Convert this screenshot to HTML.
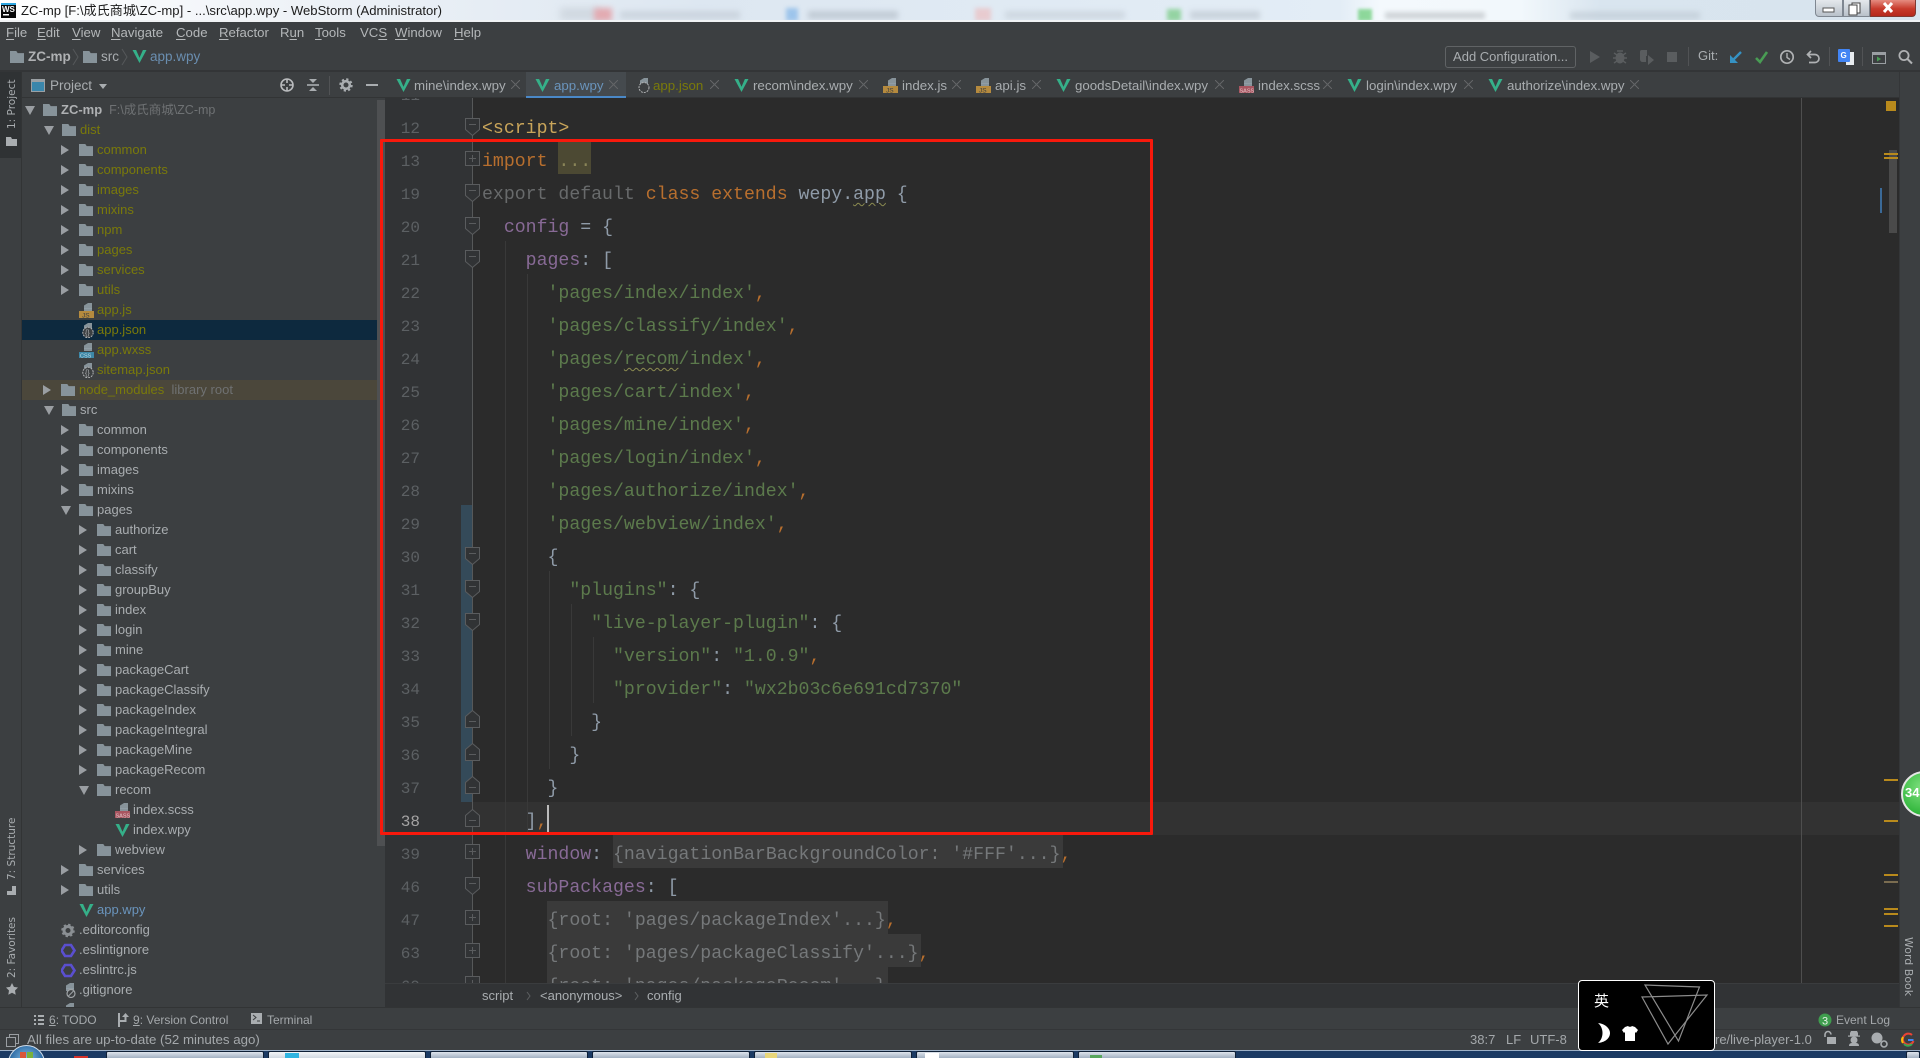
<!DOCTYPE html>
<html><head><meta charset="utf-8"><title>WebStorm</title>
<style>
*{box-sizing:border-box}
html,body{margin:0;padding:0;background:#3c3f41}
#p{position:relative;width:1920px;height:1058px;overflow:hidden;background:#3c3f41;font:13px/20px "Liberation Sans","Noto Sans CJK SC",sans-serif;color:#afb1b3}
.a{position:absolute;white-space:pre}
.m{position:absolute;top:23px;line-height:20px;font-size:13.2px;color:#b4b7b9}
.m u{text-decoration:underline;text-underline-offset:2px}
.t{position:absolute;top:76px;line-height:20px;font-size:13.3px;color:#a9adb0;white-space:pre}
.x{position:absolute;top:80px;width:9px;height:9px;background:linear-gradient(45deg,transparent 46%,#626466 46%,#626466 54%,transparent 54%),linear-gradient(-45deg,transparent 46%,#626466 46%,#626466 54%,transparent 54%)}
#tree{position:absolute;left:22px;top:100px;width:363px;height:907px;overflow:hidden}
.r{position:relative;height:20px;line-height:20px;white-space:pre;color:#a9adb0;margin-left:-22px;width:385px}
.r.d,.r.d span{color:#7a7a0a}
.r .ar{position:absolute;left:var(--x);top:5px;width:0;height:0;border-left:8px solid #9a9ea2;border-top:5px solid transparent;border-bottom:5px solid transparent}
.r .dn{position:absolute;left:var(--x);top:6px;width:0;height:0;border-top:9px solid #9a9ea2;border-left:5px solid transparent;border-right:5px solid transparent}
.r .fo{position:absolute;left:calc(var(--x) + 18px);top:4px;width:14px;height:12px;background:#87939a;clip-path:polygon(0 0,45% 0,55% 18%,100% 18%,100% 100%,0 100%)}
.r span{position:absolute;left:calc(var(--x) + 36px);top:0}
.r .ic{position:absolute;left:calc(var(--x) + 18px);top:3px}
.r.f span{left:calc(var(--x) + 18px)}
.r.f .ic{left:var(--x)}
#code{position:absolute;left:385px;top:98px;width:1514px;height:885px;overflow:hidden;background:#2b2b2b}
.l{position:absolute;left:97px;height:33px;font:18.2px/41px "Liberation Mono",monospace;white-space:pre;color:#8f9ba8}
.n{position:absolute;left:0;width:35px;text-align:right;font:16px/41px "Liberation Mono",monospace;color:#5c6063;height:33px}
.s{color:#5c7a4c}.k{color:#b86f2e}.q{color:#886a96}.g{color:#686a6b}.c{color:#b86f2e}
.wv{text-decoration:underline wavy #8c8c50 1px;text-underline-offset:3px}
.v{position:absolute;writing-mode:vertical-rl;transform:rotate(180deg);font-size:10.5px;line-height:14px;color:#a9adb0;white-space:pre;font-family:"DejaVu Sans",sans-serif}
.b{position:absolute;font-size:12px;line-height:20px;color:#a4a8ab;white-space:pre}
.tb{position:absolute;top:1051px;height:10px;border-radius:2px 2px 0 0;background:linear-gradient(#dfe5ec,#8fa0b5);border:1px solid #0f2036}
</style></head><body><div id="p">

<!-- title bar -->
<div class="a" style="left:0;top:0;width:1920px;height:21px;background:linear-gradient(90deg,#fff 0,#eef2f7 300px,#dde7f1 700px,#e3edf6 1340px,#f4f9fd 1380px,#f2f8fc 1520px,#d9e5ef 1600px,#d8e4ee 1920px);overflow:hidden">
 <div class="a" style="left:0;top:0;width:1920px;height:21px;opacity:.55">
 <div class="a" style="left:560px;top:8px;width:40px;height:12px;background:#c0c8d0;filter:blur(4px)"></div>
 <div class="a" style="left:594px;top:8px;width:18px;height:13px;background:#e4777c;filter:blur(3px)"></div>
 <div class="a" style="left:620px;top:11px;width:120px;height:8px;background:#bcc5cf;filter:blur(3px)"></div>
 <div class="a" style="left:786px;top:8px;width:12px;height:13px;background:#69a8e6;filter:blur(2px)"></div>
 <div class="a" style="left:808px;top:11px;width:90px;height:8px;background:#a9b3bd;filter:blur(3px)"></div>
 <div class="a" style="left:975px;top:8px;width:16px;height:13px;background:#efb3b3;filter:blur(2px)"></div>
 <div class="a" style="left:1005px;top:11px;width:120px;height:8px;background:#c0c9d2;filter:blur(3px)"></div>
 <div class="a" style="left:1167px;top:9px;width:14px;height:12px;background:#55c05f;filter:blur(2px)"></div>
 <div class="a" style="left:1190px;top:11px;width:70px;height:8px;background:#b4bdc6;filter:blur(3px)"></div>
 <div class="a" style="left:1358px;top:9px;width:14px;height:12px;background:#3fc14d;filter:blur(1.5px)"></div>
 <div class="a" style="left:1385px;top:12px;width:100px;height:7px;background:#b3b7bb;filter:blur(2.5px)"></div>
 <div class="a" style="left:1570px;top:12px;width:130px;height:7px;background:#b5c0ca;filter:blur(3px)"></div>
 </div>
 <div class="a" style="left:21px;top:1px;font-size:13.1px;line-height:20px;color:#1c1c1c">ZC-mp [F:\成氏商城\ZC-mp] - ...\src\app.wpy - WebStorm (Administrator)</div>
</div>
<div class="a" style="left:0;top:20px;width:1920px;height:2px;background:#f0f2f4"></div>
<svg class="a" style="left:1px;top:3px" width="15" height="15"><rect width="15" height="15" fill="#0a0a0a"/><rect x="2" y="11" width="6" height="1.5" fill="#fff"/><text x="1" y="9" font-size="8" font-weight="700" fill="#fff" font-family="Liberation Sans">WS</text><rect x="0" y="0" width="15" height="2" fill="#2fa6e0"/></svg>
<!-- window controls -->
<div class="a" style="left:1815px;top:0;width:28px;height:17px;background:linear-gradient(#e4e8ec,#b9c1ca);border:1px solid #7f8791;border-top:0;border-radius:0 0 0 4px"></div>
<div class="a" style="left:1843px;top:0;width:27px;height:17px;background:linear-gradient(#e4e8ec,#b9c1ca);border:1px solid #7f8791;border-top:0"></div>
<div class="a" style="left:1870px;top:0;width:46px;height:17px;background:linear-gradient(#e58c80,#c73a2b 55%,#b5291d);border:1px solid #7f3a33;border-top:0;border-radius:0 0 4px 0"></div>
<svg class="a" style="left:1815px;top:0" width="101" height="17"><rect x="8" y="8" width="11" height="4" fill="#fff" stroke="#555"/><rect x="37" y="3" width="8" height="10" fill="#fff" stroke="#444"/><rect x="34" y="5" width="8" height="10" fill="#fff" stroke="#444"/><path d="M69 3l8 9M77 3l-8 9" stroke="#fff" stroke-width="3"/></svg>

<!-- menu -->
<div class="m" style="left:6px"><u>F</u>ile</div><div class="m" style="left:37px"><u>E</u>dit</div><div class="m" style="left:72px"><u>V</u>iew</div><div class="m" style="left:111px"><u>N</u>avigate</div><div class="m" style="left:176px"><u>C</u>ode</div><div class="m" style="left:219px"><u>R</u>efactor</div><div class="m" style="left:280px">R<u>u</u>n</div><div class="m" style="left:315px"><u>T</u>ools</div><div class="m" style="left:360px">VC<u>S</u></div><div class="m" style="left:395px"><u>W</u>indow</div><div class="m" style="left:454px"><u>H</u>elp</div>

<!-- nav bar -->
<div class="a" style="left:10px;top:51px;width:14px;height:12px;background:#87939a;clip-path:polygon(0 0,45% 0,55% 18%,100% 18%,100% 100%,0 100%)"></div>
<div class="a" style="left:28px;top:47px;font-weight:700;color:#afb1b3;font-size:13.5px">ZC-mp</div>
<svg class="a" style="left:72px;top:48px" width="60" height="18" fill="none" stroke="#55585a"><path d="M1 1l5 8-5 8M50 1l5 8-5 8"/></svg>
<div class="a" style="left:83px;top:51px;width:14px;height:12px;background:#87939a;clip-path:polygon(0 0,45% 0,55% 18%,100% 18%,100% 100%,0 100%)"></div>
<div class="a" style="left:101px;top:47px;color:#a9adb0;font-size:13.5px">src</div>
<div class="a" style="left:150px;top:47px;color:#6a8eb0;font-size:13.5px">app.wpy</div>

<!-- toolbar button + git -->
<div class="a" style="left:1445px;top:46px;width:131px;height:22px;border:1px solid #606365;border-radius:3px;text-align:center;font-size:13px;line-height:20px;color:#a9adb0">Add Configuration...</div>
<div class="a" style="left:1698px;top:46px;font-size:13px;line-height:20px;color:#a9adb0">Git:</div>

<!-- tab bar -->
<div class="a" style="left:385px;top:72px;width:1514px;height:26px;background:#3c3f41"></div>
<div class="a" style="left:0;top:70px;width:1920px;height:2px;background:#333537"></div>
<div class="a" style="left:22px;top:97px;width:1877px;height:1px;background:#323435"></div>
<div class="a" style="left:526px;top:72px;width:100px;height:27px;background:#454a4e;border-bottom:3px solid #4a88c7"></div>
<div class="t" style="left:414px">mine\index.wpy</div><div class="x" style="left:511px"></div>
<div class="t" style="left:554px;color:#6a94bc">app.wpy</div><div class="x" style="left:609px"></div>
<div class="t" style="left:653px;color:#7a7a0a">app.json</div><div class="x" style="left:710px"></div>
<div class="t" style="left:753px">recom\index.wpy</div><div class="x" style="left:859px"></div>
<div class="t" style="left:902px">index.js</div><div class="x" style="left:952px"></div>
<div class="t" style="left:995px">api.js</div><div class="x" style="left:1032px"></div>
<div class="t" style="left:1075px">goodsDetail\index.wpy</div><div class="x" style="left:1215px"></div>
<div class="t" style="left:1258px">index.scss</div><div class="x" style="left:1323px"></div>
<div class="t" style="left:1366px">login\index.wpy</div><div class="x" style="left:1464px"></div>
<div class="t" style="left:1507px">authorize\index.wpy</div><div class="x" style="left:1630px"></div>

<!-- left strip -->
<div class="a" style="left:0;top:72px;width:21px;height:86px;background:#2f3234"></div>
<div class="a" style="left:21px;top:72px;width:1px;height:935px;background:#323435"></div>
<div class="v" style="left:5px;top:81px;height:48px">1: Project</div>
<div class="v" style="left:5px;top:820px;height:60px">7: Structure</div>
<div class="v" style="left:5px;top:920px;height:58px">2: Favorites</div>

<!-- project header -->
<div class="a" style="left:50px;top:76px;font-size:13.5px;color:#a9adb0">Project</div>

<!-- tree -->
<div id="tree">
<div class="r" style="--x:25px"><b class="dn"></b><b class="fo"></b><span><b style="color:#afb1b3">ZC-mp</b><span style="position:static;color:#6f7274;font-size:12.5px">  F:\成氏商城\ZC-mp</span></span></div>
<div class="r d" style="--x:44px"><b class="dn"></b><b class="fo"></b><span>dist</span></div>
<div class="r d" style="--x:61px"><b class="ar"></b><b class="fo"></b><span>common</span></div>
<div class="r d" style="--x:61px"><b class="ar"></b><b class="fo"></b><span>components</span></div>
<div class="r d" style="--x:61px"><b class="ar"></b><b class="fo"></b><span>images</span></div>
<div class="r d" style="--x:61px"><b class="ar"></b><b class="fo"></b><span>mixins</span></div>
<div class="r d" style="--x:61px"><b class="ar"></b><b class="fo"></b><span>npm</span></div>
<div class="r d" style="--x:61px"><b class="ar"></b><b class="fo"></b><span>pages</span></div>
<div class="r d" style="--x:61px"><b class="ar"></b><b class="fo"></b><span>services</span></div>
<div class="r d" style="--x:61px"><b class="ar"></b><b class="fo"></b><span>utils</span></div>
<div class="r d f" style="--x:79px"><svg class="ic" width="16" height="15"><use href="#pg"/><rect y="8" width="15" height="7" fill="#b58a3e"/><text x="3" y="14.5" font-size="6.5" fill="#3c3f41" font-family="Liberation Sans">JS</text></svg><span>app.js</span></div>
<div class="r d f" style="--x:79px;background:#0d293e"><svg class="ic" width="16" height="15"><use href="#pg"/><circle cx="9" cy="9.5" r="5.2" fill="#3c3f41" stroke="#afb1b3" stroke-dasharray="2 1"/><text x="6" y="12" font-size="7" fill="#afb1b3" font-family="Liberation Sans">{}</text></svg><span>app.json</span></div>
<div class="r d f" style="--x:79px"><svg class="ic" width="16" height="15"><use href="#pg"/><rect y="9" width="15" height="6" fill="#3d88a8"/><text x="1" y="14.5" font-size="5.5" fill="#c8dbe4" font-family="Liberation Sans">CSS</text></svg><span>app.wxss</span></div>
<div class="r d f" style="--x:79px"><svg class="ic" width="16" height="15"><use href="#pg"/><circle cx="9" cy="9.5" r="5.2" fill="#3c3f41" stroke="#afb1b3" stroke-dasharray="2 1"/><text x="6" y="12" font-size="7" fill="#afb1b3" font-family="Liberation Sans">{}</text></svg><span>sitemap.json</span></div>
<div class="r" style="--x:43px;background:#4b473b"><b class="ar"></b><b class="fo"></b><span style="color:#7a7a0a">node_modules<span style="position:static;color:#6f7172">  library root</span></span></div>
<div class="r" style="--x:44px"><b class="dn"></b><b class="fo"></b><span>src</span></div>
<div class="r" style="--x:61px"><b class="ar"></b><b class="fo"></b><span>common</span></div>
<div class="r" style="--x:61px"><b class="ar"></b><b class="fo"></b><span>components</span></div>
<div class="r" style="--x:61px"><b class="ar"></b><b class="fo"></b><span>images</span></div>
<div class="r" style="--x:61px"><b class="ar"></b><b class="fo"></b><span>mixins</span></div>
<div class="r" style="--x:61px"><b class="dn"></b><b class="fo"></b><span>pages</span></div>
<div class="r" style="--x:79px"><b class="ar"></b><b class="fo"></b><span>authorize</span></div>
<div class="r" style="--x:79px"><b class="ar"></b><b class="fo"></b><span>cart</span></div>
<div class="r" style="--x:79px"><b class="ar"></b><b class="fo"></b><span>classify</span></div>
<div class="r" style="--x:79px"><b class="ar"></b><b class="fo"></b><span>groupBuy</span></div>
<div class="r" style="--x:79px"><b class="ar"></b><b class="fo"></b><span>index</span></div>
<div class="r" style="--x:79px"><b class="ar"></b><b class="fo"></b><span>login</span></div>
<div class="r" style="--x:79px"><b class="ar"></b><b class="fo"></b><span>mine</span></div>
<div class="r" style="--x:79px"><b class="ar"></b><b class="fo"></b><span>packageCart</span></div>
<div class="r" style="--x:79px"><b class="ar"></b><b class="fo"></b><span>packageClassify</span></div>
<div class="r" style="--x:79px"><b class="ar"></b><b class="fo"></b><span>packageIndex</span></div>
<div class="r" style="--x:79px"><b class="ar"></b><b class="fo"></b><span>packageIntegral</span></div>
<div class="r" style="--x:79px"><b class="ar"></b><b class="fo"></b><span>packageMine</span></div>
<div class="r" style="--x:79px"><b class="ar"></b><b class="fo"></b><span>packageRecom</span></div>
<div class="r" style="--x:79px"><b class="dn"></b><b class="fo"></b><span>recom</span></div>
<div class="r f" style="--x:115px"><svg class="ic" width="16" height="15"><use href="#pg"/><rect y="8" width="15" height="7" fill="#a85560"/><text x="0.5" y="14.3" font-size="5.5" fill="#e3c9cc" font-family="Liberation Sans">SASS</text></svg><span>index.scss</span></div>
<div class="r f" style="--x:115px"><svg class="ic" width="15" height="15"><use href="#vv"/></svg><span>index.wpy</span></div>
<div class="r" style="--x:79px"><b class="ar"></b><b class="fo"></b><span>webview</span></div>
<div class="r" style="--x:61px"><b class="ar"></b><b class="fo"></b><span>services</span></div>
<div class="r" style="--x:61px"><b class="ar"></b><b class="fo"></b><span>utils</span></div>
<div class="r f" style="--x:79px"><svg class="ic" width="15" height="15"><use href="#vv"/></svg><span style="color:#6a94bc">app.wpy</span></div>
<div class="r f" style="--x:61px"><svg class="ic" width="15" height="15"><circle cx="7" cy="7.5" r="4" fill="none" stroke="#8a8f93" stroke-width="3"/><circle cx="7" cy="7.5" r="6" fill="none" stroke="#8a8f93" stroke-width="1.5" stroke-dasharray="2.4 2.3"/></svg><span>.editorconfig</span></div>
<div class="r f" style="--x:61px"><svg class="ic" width="15" height="15"><path d="M4 2h6l3.5 5.5L10 13H4L.5 7.5z" fill="none" stroke="#5a4fcf" stroke-width="2.6"/></svg><span>.eslintignore</span></div>
<div class="r f" style="--x:61px"><svg class="ic" width="15" height="15"><path d="M4 2h6l3.5 5.5L10 13H4L.5 7.5z" fill="none" stroke="#5a4fcf" stroke-width="2.6"/></svg><span>.eslintrc.js</span></div>
<div class="r f" style="--x:61px"><svg class="ic" width="16" height="15"><use href="#pg"/><circle cx="10" cy="10.5" r="4" fill="#3c3f41" stroke="#a0a4a7" stroke-width="1.2"/><path d="M7.5 13l5-5" stroke="#a0a4a7"/></svg><span>.gitignore</span></div>
<div class="r f" style="--x:61px"><svg class="ic" width="16" height="15"><use href="#pg"/></svg><span>.npmrc</span></div>
</div>
<div class="a" style="left:377px;top:100px;width:8px;height:746px;background:#4e5052"></div>

<!-- editor -->
<div id="code">
 <!-- gutter -->
 <div class="a" style="left:0;top:0;width:87px;height:885px;background:#313335"></div>
 <div class="a" style="left:76px;top:407px;width:11px;height:297px;background:#344a59"></div>
 <!-- current line -->
 <div class="a" style="left:88px;top:704px;width:1426px;height:33px;background:#323232"></div>
 <!-- folded regions -->
 <div class="a" style="left:173px;top:44px;width:33px;height:32px;background:#4c4933"></div>
 <div class="a" style="left:228px;top:737px;width:450px;height:33px;background:#3a3a3a"></div>
 <div class="a" style="left:162px;top:803px;width:341px;height:33px;background:#3a3a3a"></div>
 <div class="a" style="left:162px;top:836px;width:374px;height:33px;background:#3a3a3a"></div>
 <div class="a" style="left:162px;top:869px;width:341px;height:16px;background:#3a3a3a"></div>
 <!-- indent guides -->
 <div class="a" style="left:120px;top:143px;width:1px;height:742px;background:#393939"></div>
 <div class="a" style="left:142px;top:176px;width:1px;height:561px;background:#393939"></div>
 <div class="a" style="left:164px;top:473px;width:1px;height:198px;background:#393939"></div>
 <div class="a" style="left:186px;top:506px;width:1px;height:132px;background:#393939"></div>
 <div class="a" style="left:208px;top:539px;width:1px;height:66px;background:#393939"></div>
 <!-- fold line -->
 <div class="a" style="left:87px;top:0;width:1px;height:885px;background:#565859"></div>
 <!-- right margin -->
 <div class="a" style="left:1416px;top:0;width:1px;height:885px;background:#4e4e4e"></div>

 <!-- line numbers -->
 <div class="n" style="top:-22px">11</div>
 <div class="n" style="top:11px">12</div><div class="n" style="top:44px">13</div><div class="n" style="top:77px">19</div><div class="n" style="top:110px">20</div><div class="n" style="top:143px">21</div><div class="n" style="top:176px">22</div><div class="n" style="top:209px">23</div><div class="n" style="top:242px">24</div><div class="n" style="top:275px">25</div><div class="n" style="top:308px">26</div><div class="n" style="top:341px">27</div><div class="n" style="top:374px">28</div><div class="n" style="top:407px">29</div><div class="n" style="top:440px">30</div><div class="n" style="top:473px">31</div><div class="n" style="top:506px">32</div><div class="n" style="top:539px">33</div><div class="n" style="top:572px">34</div><div class="n" style="top:605px">35</div><div class="n" style="top:638px">36</div><div class="n" style="top:671px">37</div><div class="n" style="top:704px;color:#a4a3a3">38</div><div class="n" style="top:737px">39</div><div class="n" style="top:770px">46</div><div class="n" style="top:803px">47</div><div class="n" style="top:836px">63</div><div class="n" style="top:869px">69</div>

 <!-- code -->
 <div class="l" style="top:11px;color:#c9a55a">&lt;script&gt;</div>
 <div class="l" style="top:44px"><span class="k">import</span> <span style="color:#8a8558">...</span></div>
 <div class="l" style="top:77px"><span class="g">export default</span> <span class="k">class extends</span> wepy.<span class="wv">app</span> {</div>
 <div class="l" style="top:110px">  <span class="q">config</span> = {</div>
 <div class="l" style="top:143px">    <span class="q">pages</span>: [</div>
 <div class="l" style="top:176px">      <span class="s">'pages/index/index'</span><span class="c">,</span></div>
 <div class="l" style="top:209px">      <span class="s">'pages/classify/index'</span><span class="c">,</span></div>
 <div class="l" style="top:242px">      <span class="s">'pages/<span class="wv">recom</span>/index'</span><span class="c">,</span></div>
 <div class="l" style="top:275px">      <span class="s">'pages/cart/index'</span><span class="c">,</span></div>
 <div class="l" style="top:308px">      <span class="s">'pages/mine/index'</span><span class="c">,</span></div>
 <div class="l" style="top:341px">      <span class="s">'pages/login/index'</span><span class="c">,</span></div>
 <div class="l" style="top:374px">      <span class="s">'pages/authorize/index'</span><span class="c">,</span></div>
 <div class="l" style="top:407px">      <span class="s">'pages/webview/index'</span><span class="c">,</span></div>
 <div class="l" style="top:440px">      {</div>
 <div class="l" style="top:473px">        <span class="s">"plugins"</span>: {</div>
 <div class="l" style="top:506px">          <span class="s">"live-player-plugin"</span>: {</div>
 <div class="l" style="top:539px">            <span class="s">"version"</span>: <span class="s">"1.0.9"</span><span class="c">,</span></div>
 <div class="l" style="top:572px">            <span class="s">"provider"</span>: <span class="s">"wx2b03c6e691cd7370"</span></div>
 <div class="l" style="top:605px">          }</div>
 <div class="l" style="top:638px">        }</div>
 <div class="l" style="top:671px">      }</div>
 <div class="l" style="top:704px">    ]<span class="c">,</span></div>
 <div class="a" style="left:162px;top:707px;width:2px;height:27px;background:#bbb"></div>
 <div class="l" style="top:737px">    <span class="q">window</span>: <span style="color:#75787a">{navigationBarBackgroundColor: '#FFF'...}</span><span class="c">,</span></div>
 <div class="l" style="top:770px">    <span class="q">subPackages</span>: [</div>
 <div class="l" style="top:803px">      <span style="color:#75787a">{root: 'pages/packageIndex'...}</span><span class="c">,</span></div>
 <div class="l" style="top:836px">      <span style="color:#75787a">{root: 'pages/packageClassify'...}</span><span class="c">,</span></div>
 <div class="l" style="top:869px">      <span style="color:#75787a">{root: 'pages/packageRecom'...}</span><span class="c">,</span></div>

 <!-- fold markers -->
 <svg class="a" style="left:0;top:0" width="120" height="885" fill="#313335" stroke="#5a5c5e">
  <use href="#fo" y="11"/><use href="#fp" y="44"/><use href="#fo" y="77"/><use href="#fo" y="110"/><use href="#fo" y="143"/>
  <use href="#fo" y="440"/><use href="#fo" y="473"/><use href="#fo" y="506"/>
  <use href="#fc" y="605"/><use href="#fc" y="638"/><use href="#fc" y="671"/><use href="#fc" y="704"/>
  <use href="#fp" y="737"/><use href="#fo" y="770"/><use href="#fp" y="803"/><use href="#fp" y="836"/><use href="#fp" y="869"/>
 </svg>

 <!-- error stripes -->
 <div class="a" style="left:1501px;top:3px;width:10px;height:10px;background:#b98a1c"></div>
 <div class="a" style="left:1504px;top:52px;width:8px;height:83px;background:#4a4a4a"></div>
 <div class="a" style="left:1495px;top:90px;width:2px;height:25px;background:#3b6a98"></div>
 <div class="a" style="left:1499px;top:55px;width:14px;height:2px;background:#b98a1c"></div>
 <div class="a" style="left:1499px;top:59px;width:14px;height:2px;background:#b98a1c"></div>
 <div class="a" style="left:1499px;top:681px;width:14px;height:2px;background:#b98a1c"></div>
 <div class="a" style="left:1499px;top:722px;width:14px;height:2px;background:#b98a1c"></div>
 <div class="a" style="left:1499px;top:776px;width:14px;height:2px;background:#b98a1c"></div>
 <div class="a" style="left:1499px;top:783px;width:14px;height:2px;background:#7a6c50"></div>
 <div class="a" style="left:1499px;top:810px;width:14px;height:2px;background:#b98a1c"></div>
 <div class="a" style="left:1499px;top:815px;width:14px;height:2px;background:#b98a1c"></div>
 <div class="a" style="left:1499px;top:827px;width:14px;height:2px;background:#b98a1c"></div>
</div>

<!-- breadcrumbs -->
<div class="a" style="left:385px;top:983px;width:1514px;height:24px;background:#313335;border-top:1px solid #3a3c3e"></div>
<div class="b" style="left:482px;top:986px;color:#a9adb0;font-size:13px">script</div>
<div class="b" style="left:540px;top:986px;color:#a9adb0;font-size:13px">&lt;anonymous&gt;</div>
<div class="b" style="left:647px;top:986px;color:#a9adb0;font-size:13px">config</div>
<svg class="a" style="left:524px;top:990px" width="120" height="12" fill="none" stroke="#5c5f61"><path d="M3 2l3 4-3 4M111 2l3 4-3 4"/></svg>

<!-- bottom tool bar -->
<div class="a" style="left:0;top:1007px;width:1920px;height:1px;background:#323435"></div>
<div class="a" style="left:0;top:1029px;width:1920px;height:1px;background:#343638"></div>
<div class="b" style="left:49px;top:1010px"><u>6</u>: TODO</div>
<div class="b" style="left:133px;top:1010px"><u>9</u>: Version Control</div>
<div class="b" style="left:267px;top:1010px">Terminal</div>
<div class="b" style="left:1836px;top:1010px">Event Log</div>

<!-- status -->
<div class="b" style="left:27px;top:1030px;font-size:13.3px">All files are up-to-date (52 minutes ago)</div>
<div class="b" style="left:1470px;top:1030px;font-size:13px">38:7</div>
<div class="b" style="left:1506px;top:1030px;font-size:13px">LF</div>
<div class="b" style="left:1530px;top:1030px;font-size:13px">UTF-8</div>
<div class="b" style="left:1715px;top:1030px;font-size:13px">re/live-player-1.0</div>

<!-- right strip -->
<div class="a" style="left:1899px;top:72px;width:21px;height:935px;background:#3c3f41;border-left:1px solid #343638"></div>
<div class="a" style="left:1901px;top:937px;font:11px/14px 'DejaVu Sans',sans-serif;color:#a9adb0;writing-mode:vertical-rl;white-space:pre">Word Book</div>

<!-- taskbar -->
<div class="a" style="left:0;top:1050px;width:1920px;height:8px;background:#1b3a63;border-top:1px solid #9db0c6"></div>
<div class="tb" style="left:106px;width:158px"></div>
<div class="tb" style="left:268px;width:158px;background:linear-gradient(#f4f6f8,#c7d0da)"></div>
<div class="tb" style="left:430px;width:158px"></div>
<div class="tb" style="left:592px;width:158px"></div>
<div class="tb" style="left:754px;width:158px"></div>
<div class="tb" style="left:916px;width:158px"></div>
<div class="tb" style="left:1078px;width:158px"></div>
<div class="tb" style="left:1906px;width:14px"></div>
<div class="a" style="left:285px;top:1053px;width:14px;height:5px;background:#2fb4e0"></div>
<div class="a" style="left:765px;top:1053px;width:12px;height:5px;background:#e8d67a"></div>
<div class="a" style="left:925px;top:1053px;width:14px;height:5px;background:#fff"></div>
<div class="a" style="left:1090px;top:1055px;width:12px;height:3px;background:#58a65c"></div>
<div class="a" style="left:74px;top:1056px;width:14px;height:2px;background:#d5322a"></div>
<div class="a" style="left:8px;top:1045px;width:37px;height:37px;border-radius:50%;background:radial-gradient(circle at 50% 40%,#86c0e8,#1e5c98 70%);border:1px solid #d0dce8"></div>
<div class="a" style="left:20px;top:1052px;width:6px;height:6px;background:#d9563a"></div>
<div class="a" style="left:27px;top:1052px;width:6px;height:6px;background:#79b13c"></div>

<!-- icon layer -->
<svg class="a" style="left:0;top:0" width="1920" height="1058">
<defs>
 <symbol id="pg" viewBox="0 0 16 15" width="16" height="15"><path d="M5 2.500L9 0h4v8H5z" fill="#87939a"/><path d="M5 5h8v1H5z" fill="#9aa7b0" opacity=".5"/></symbol>
 <symbol id="vv" viewBox="0 0 15 15" width="15" height="15"><path d="M0.500 1h3.600L7.500 8.800 10.900 1h3.600L7.500 14z" fill="#35b089"/></symbol>
 <symbol id="fo" viewBox="0 0 120 33" width="120" height="33" overflow="visible"><path d="M80.500 9.500h14v11l-7 6-7-6z"/><path d="M84 15.500h7" fill="none"/></symbol>
 <symbol id="fc" viewBox="0 0 120 33" width="120" height="33" overflow="visible"><path d="M80.500 24.500h14v-11l-7-6-7 6z"/><path d="M84 18.500h7" fill="none"/></symbol>
 <symbol id="fp" viewBox="0 0 120 33" width="120" height="33" overflow="visible"><path d="M80.500 9.500h14v14h-14z"/><path d="M84 16.500h7M87.500 13v7" fill="none"/></symbol>
</defs>

<!-- tab icons -->
<use href="#vv" x="396" y="78"/><use href="#vv" x="535" y="78"/><use href="#vv" x="734" y="78"/><use href="#vv" x="1056" y="78"/><use href="#vv" x="1347" y="78"/><use href="#vv" x="1488" y="78"/>
<use href="#vv" x="132" y="49"/>
<g transform="translate(635 78)"><use href="#pg"/><circle cx="9" cy="9.500" r="5" fill="#3c3f41" stroke="#afb1b3" stroke-dasharray="2 1"/></g>
<g transform="translate(883 78)"><use href="#pg"/><rect y="8" width="15" height="7" fill="#b58a3e"/><text x="3" y="14.500" font-size="6.500" fill="#3c3f41" font-family="Liberation Sans">JS</text></g>
<g transform="translate(976 78)"><use href="#pg"/><rect y="8" width="15" height="7" fill="#b58a3e"/><text x="3" y="14.500" font-size="6.500" fill="#3c3f41" font-family="Liberation Sans">JS</text></g>
<g transform="translate(1239 78)"><use href="#pg"/><rect y="8" width="15" height="7" fill="#a85560"/><text x="0.500" y="14.300" font-size="5.500" fill="#e3c9cc" font-family="Liberation Sans">SASS</text></g>

<!-- sidebar icons -->
<path d="M6 137h5l1 2h5v7H6z" fill="#a9adb0"/>
<path d="M12 886h4v9H7v-4h5z" fill="#a9adb0"/>
<path d="M12 983l1.900 3.900 4.100.6-3 3 .7 4.300-3.700-2-3.700 2 .7-4.300-3-3 4.100-.6z" fill="#a9adb0"/>

<!-- project header icons -->
<rect x="31.500" y="79.500" width="13" height="12" fill="#3a86ab" stroke="#9aa0a4"/><rect x="31.500" y="79.500" width="13" height="2.500" fill="#9aa0a4"/>
<path d="M99 84h8l-4 5z" fill="#a9adb0"/>
<circle cx="287" cy="85" r="6" fill="none" stroke="#b9bbbd" stroke-width="1.600"/><path d="M287 79v4M287 87v4M281 85h4M289 85h4" stroke="#b9bbbd" stroke-width="1.600"/>
<path d="M309 79h8l-4 4zM309 91h8l-4-4z" fill="#a9adb0"/><path d="M307 85h12" stroke="#a9adb0" stroke-width="1.600"/>
<path d="M329.500 76v19" stroke="#515355"/>
<circle cx="346" cy="85" r="3.800" fill="none" stroke="#a9adb0" stroke-width="2.600"/><circle cx="346" cy="85" r="5.600" fill="none" stroke="#a9adb0" stroke-width="2.200" stroke-dasharray="2.200 2.200"/>
<rect x="366" y="84" width="12" height="2" fill="#a9adb0"/>

<!-- toolbar -->
<path d="M1590 51l10 6-10 6z" fill="#5a5d5f"/>
<ellipse cx="1620" cy="58" rx="4.500" ry="5.500" fill="#5a5d5f"/><path d="M1614 53l3 2M1626 53l-3 2M1613 58h14M1614 63l3-2M1626 63l-3-2M1617 51h6" stroke="#5a5d5f" stroke-width="1.400" fill="none"/>
<path d="M1640 52c0-2 1-2 3-2h4v6h-1v6h-3c-2 0-3-1-3-3z" fill="#5a5d5f"/><path d="M1648 55l6 5-6 5z" fill="#5a5d5f"/>
<rect x="1667" y="52" width="10" height="10" fill="#5a5d5f"/>
<path d="M1688.500 47v19M1829.500 47v19M1862.500 47v19" stroke="#515355"/>
<path d="M1741 52l-8 8" stroke="#3592c4" stroke-width="2.400"/><path d="M1730 55v8h8z" fill="#3592c4"/>
<path d="M1756 58l4 4 7-10" stroke="#499c54" stroke-width="2.600" fill="none"/>
<circle cx="1787" cy="57" r="6.200" fill="none" stroke="#afb1b3" stroke-width="1.700"/><path d="M1787 53v4.500l3 2" fill="none" stroke="#afb1b3" stroke-width="1.400"/>
<path d="M1811 51l-3.500 3.500 3.500 3.500M1808 54.500h7a3.700 3.700 0 0 1 0 8h-6" fill="none" stroke="#afb1b3" stroke-width="1.700"/>
<rect x="1846" y="52" width="8" height="13" fill="#e8ecef"/><rect x="1838" y="49" width="12" height="13" rx="1" fill="#4285f4"/><text x="1840.500" y="58" font-size="8" font-weight="700" fill="#fff" font-family="Liberation Sans">G</text>
<rect x="1872.500" y="52.500" width="13" height="11" fill="none" stroke="#9a9ea2"/><rect x="1872.500" y="52.500" width="13" height="2.500" fill="#9a9ea2"/><path d="M1877 56.500l4 2.500-4 2.500z" fill="#499c54"/>
<circle cx="1904" cy="55.500" r="4.600" fill="none" stroke="#afb1b3" stroke-width="1.800"/><path d="M1907.500 59l4.500 4.500" stroke="#afb1b3" stroke-width="2"/>

<!-- bottom icons -->
<path d="M34 1016h2M34 1020h2M34 1024h2" stroke="#a9adb0" stroke-width="2"/><path d="M38 1016h6M38 1020h6M38 1024h6" stroke="#a9adb0" stroke-width="2"/>
<path d="M119 1013v14M119.500 1021h6v-4" fill="none" stroke="#a9adb0" stroke-width="2"/><path d="M122 1017l3.500-4 3.500 4z" fill="#a9adb0"/>
<rect x="251" y="1013" width="11" height="11" fill="#a9adb0"/><path d="M253 1015l3 2.500-3 2.500M257 1021h3" fill="none" stroke="#3c3f41"/>
<circle cx="1825" cy="1020" r="6.500" fill="#3f9d4e"/><text x="1822" y="1024.500" font-size="11" fill="#e6f2e7" font-family="Liberation Sans">3</text>
<rect x="9.500" y="1034.500" width="9" height="9" fill="none" stroke="#9a9ea2"/><rect x="6.500" y="1037.500" width="9" height="9" fill="#3c3f41" stroke="#9a9ea2"/>
<!-- status right -->
<path d="M1825 1037v-2.500a3 3 0 0 1 6 0" fill="none" stroke="#a9adb0" stroke-width="1.600"/><rect x="1827" y="1037" width="9" height="7" fill="#a9adb0"/>
<path d="M1850 1036h8v-3l-1-2h-6l-1 2z" fill="#a9adb0"/><rect x="1848" y="1035.500" width="12" height="1.200" fill="#a9adb0"/><circle cx="1854" cy="1040" r="3.500" fill="#a9adb0"/><path d="M1849 1046c0-3 2-3 5-3s5 0 5 3z" fill="#a9adb0"/>
<circle cx="1877" cy="1038" r="5.500" fill="#a9adb0"/><circle cx="1884" cy="1044" r="3" fill="none" stroke="#a9adb0" stroke-width="1.600"/>
<path d="M1912 1035a5.500 5.500 0 1 0 1.500 6" fill="none" stroke="#ea4335" stroke-width="2"/><path d="M1903 1037a5.500 5.500 0 0 0 0 6" fill="none" stroke="#fbbc05" stroke-width="2"/><path d="M1904 1044a5.500 5.500 0 0 0 8 0" fill="none" stroke="#34a853" stroke-width="2"/><path d="M1908 1040h5.500" stroke="#4285f4" stroke-width="2"/>
</svg>

<!-- green circle -->
<div class="a" style="left:1901px;top:771px;width:46px;height:46px;border-radius:50%;border:2px solid #e6e6e6;background:radial-gradient(circle at 45% 35%,#7fe07f,#2fb53a 75%)"></div>
<div class="a" style="left:1905px;top:783px;font-size:13px;font-weight:700;color:#fff">34</div>

<!-- red annotation -->
<div class="a" style="left:380px;top:139px;width:773px;height:696px;border:3px solid #f8190c;border-radius:1px"></div>

<!-- IME widget -->
<div class="a" style="left:1578px;top:980px;width:137px;height:71px;background:#000;border:1px solid #fff;border-radius:4px"></div>
<div class="a" style="left:1594px;top:992px;font-size:15px;color:#fff">英</div>
<svg class="a" style="left:1578px;top:980px" width="137" height="71">
 <path d="M67 5l54.500 2-21 54z" fill="none" stroke="#8c8c8c" stroke-width="1.200"/>
 <path d="M64 17l65-2-39 49z" fill="none" stroke="#8c8c8c" stroke-width="1.200"/>
 <path d="M20 43c6 5 6 15 0 20 9-1 12-6 12-10s-4-9-12-10z" fill="#fff"/>
 <path d="M47 47l3-1c1 1 3 1 4 0l3 1 3 3-2 3-1-1v9h-10v-9l-1 1-2-3z" fill="#fff"/>
</svg>

</div></body></html>
